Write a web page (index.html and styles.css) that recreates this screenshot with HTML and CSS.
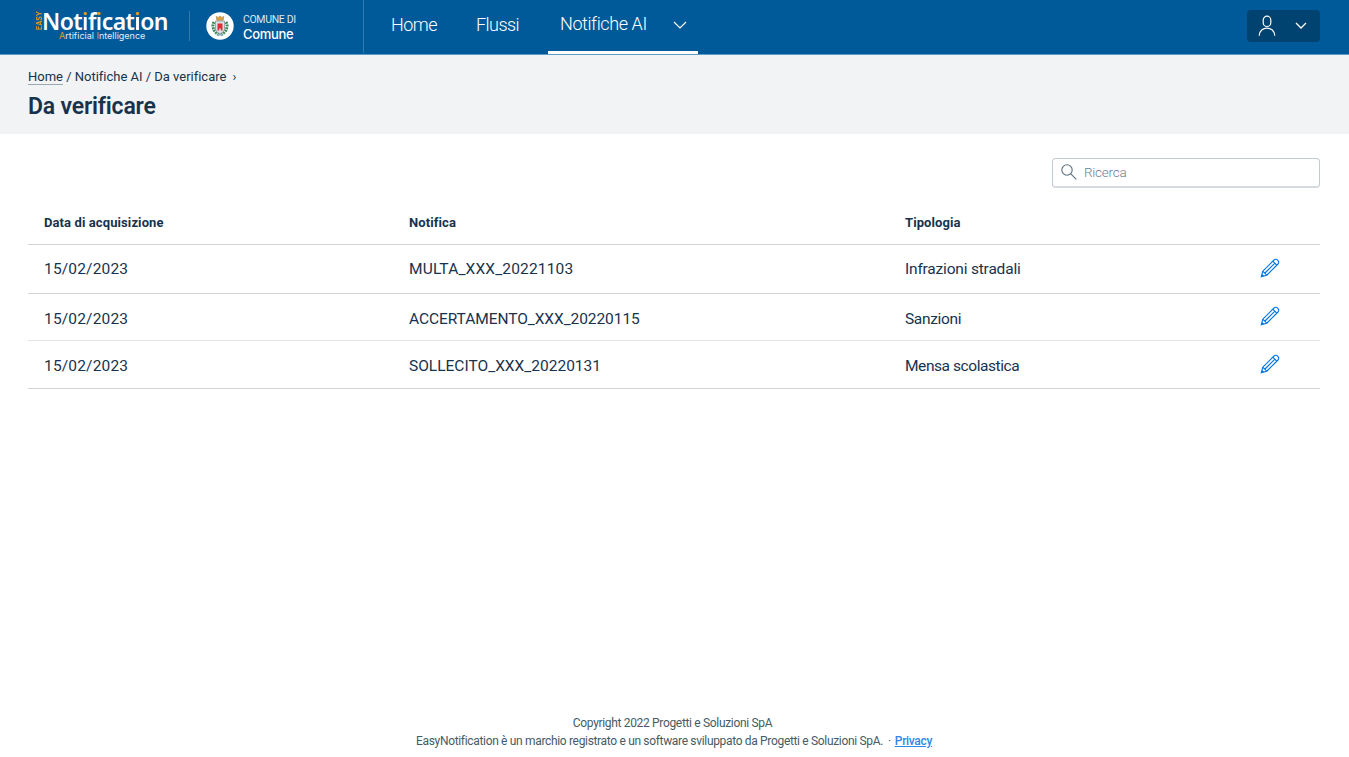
FILE: index.html
```html
<!DOCTYPE html>
<html lang="it">
<head>
<meta charset="utf-8">
<title>Da verificare</title>
<link rel="stylesheet" href="styles.css">
</head>
<body>
<svg class="defs" aria-hidden="true">
  <symbol id="pencil" viewBox="0 0 20 20">
    <path d="M1.300 18.700 2.800 13.200 14 2Q15.500.8 17 1.600L18.400 3Q19.200 4.500 18 6L6.800 17.200Z M2.800 13.200 6.800 17.200 M12.800 3.200l4 4 M5 15 14.900 5.100 M1.500 18.500l1.900-.6-1.300-1.300Z"/>
  </symbol>
</svg>
<header class="header">
  <div class="brand">
    <span class="brand-easy">EASY</span>
    <div class="brand-text">
      <div class="brand-name">Not<i>i</i>f<i>i</i>cat<i>i</i>on</div>
      <div class="brand-sub"><b>A</b>rtificial <b>I</b>ntelligence</div>
    </div>
  </div>
  <div class="entity">
    <svg class="crest" viewBox="0 0 28 28">
      <circle cx="14" cy="14" r="13.700" fill="#fff"/>
      <path d="M8 10C5.500 14 7.500 19.500 12.500 22.500M20 10C22.500 14 20.500 19.500 15.500 22.500" fill="none" stroke="#39895b" stroke-width="3" stroke-dasharray="1.900 .8"/>
      <path d="M9.500 9h9v8.500q-.5 3-4.500 4.200-4-1.200-4.500-4.200Z" fill="#dde0e5" stroke="#8c929b" stroke-width=".8"/>
      <path d="M11.500 11.500h5v7h-1.700v-2h-1.600v2h-1.700Z" fill="#e02d35"/>
      <path d="M10.200 4.400l2 1L14 4l1.800 1.400 2-1-.6 3.800h-6.400Z" fill="#d9a441" stroke="#98713a" stroke-width=".5"/>
      <path d="M11 22.500l3-1 3 1-1 1.800-2-1-2 1Z" fill="#87aeba"/>
    </svg>
    <div class="entity-text">
      <div class="entity-kind">COMUNE DI</div>
      <div class="entity-name">Comune</div>
    </div>
  </div>
  <nav class="nav">
    <a class="nav-item nav-home">Home</a>
    <a class="nav-item nav-flussi">Flussi</a>
    <a class="nav-item active"><span class="nav-ai">Notifiche AI</span>
      <svg class="chev" viewBox="0 0 14 8"><path d="M1 1l6 6 6-6"/></svg>
    </a>
  </nav>
  <button class="user">
    <svg class="person" viewBox="0 0 18 22"><rect x="5.200" y="1.200" width="7.600" height="10.300" rx="3.800"/><path d="M1.200 20.800C1.400 10.500 16.600 10.500 16.800 20.800"/></svg>
    <svg class="chev-user" viewBox="0 0 12 8"><path d="M1 1l5 5 5-5"/></svg>
  </button>
</header>
<section class="heading">
  <div class="crumbs"><a>Home</a> / Notifiche AI / Da verificare <span>›</span></div>
  <h1>Da verificare</h1>
</section>
<main class="main">
  <div class="search">
    <svg viewBox="0 0 16 16"><circle cx="6" cy="6" r="5.200"/><path d="M9.800 9.800l5.500 5.500"/></svg>
    <span>Ricerca</span>
  </div>
  <div class="table">
    <div class="row head"><span>Data di acquisizione</span><span>Notifica</span><span>Tipologia</span></div>
    <div class="row r1"><span class="date">15/02/2023</span><span class="n1">MULTA_XXX_20221103</span><span class="t1">Infrazioni stradali</span><svg class="edit"><use href="#pencil"/></svg></div>
    <div class="row r2"><span class="date">15/02/2023</span><span class="n2">ACCERTAMENTO_XXX_20220115</span><span class="t2">Sanzioni</span><svg class="edit"><use href="#pencil"/></svg></div>
    <div class="row r3"><span class="date">15/02/2023</span><span class="n3">SOLLECITO_XXX_20220131</span><span class="t3">Mensa scolastica</span><svg class="edit"><use href="#pencil"/></svg></div>
  </div>
</main>
<footer class="footer">
  <div class="copy">Copyright 2022 Progetti e Soluzioni SpA</div>
  <div class="legal"><span class="legal-text">EasyNotification è un marchio registrato e un software sviluppato da Progetti e Soluzioni SpA.</span><span class="dot">·</span><a>Privacy</a></div>
</footer>
</body>
</html>
```
FILE: styles.css
```css
* { box-sizing: border-box; }
body {
  margin: 0;
  height: 757px;
  display: flex;
  flex-direction: column;
  background: #fff;
  color: #17324d;
  font-family: Roboto, "Liberation Sans", sans-serif;
  overflow: hidden;
}
.defs { position: absolute; width: 0; height: 0; }
svg { fill: none; flex: none; }

.header {
  height: 55px;
  flex: none;
  display: flex;
  background: #005a9a;
  border-bottom: 1px solid #5d9cca;
  color: #fff;
}
.brand {
  width: 190px;
  height: 30px;
  margin-top: 11px;
  padding-left: 38px;
  display: flex;
  border-right: 1px solid #337bae;
}
.brand-easy {
  width: 4px;
  height: 19px;
  writing-mode: vertical-rl;
  transform: rotate(180deg);
  font: 700 7px/4px Inter, sans-serif;
  letter-spacing: -0.1px;
  color: #e69a17;
}
.brand-name {
  height: 21px;
  font: 600 23px/20px "Noto Sans", sans-serif;
  letter-spacing: -0.6px;
  white-space: nowrap;
}
.brand-name i {
  font-style: normal;
  color: transparent;
  background: linear-gradient(#f39c12 11px, #fff 11px);
  background-clip: text;
  -webkit-background-clip: text;
}
.brand-sub {
  padding-left: 17px;
  font: 400 9px/8px Inter, sans-serif;
  white-space: nowrap;
  color: #e3edf5;
}
.brand-sub b { font-weight: 400; color: #e69a17; }
.entity {
  width: 174px;
  height: 53px;
  padding: 12px 0 0 16px;
  display: flex;
  gap: 9px;
  border-right: 1px solid #337bae;
}
.crest { width: 28px; height: 28px; }
.entity-kind {
  font-size: 10.500px;
  line-height: 15px;
  letter-spacing: -0.35px;
  color: #dce8f2;
  white-space: nowrap;
}
.entity-name { font: 500 13px/15px Inter, sans-serif; letter-spacing: -0.3px; }
.nav { display: flex; padding-left: 27px; }
.nav-item {
  font-size: 18px;
  line-height: 49px;
  font-weight: 300;
  letter-spacing: -0.55px;
  white-space: nowrap;
}
.nav-home { width: 85px; }
.nav-flussi { width: 72px; }
.active {
  width: 150px;
  height: 54px;
  padding: 0 11px 0 12px;
  display: flex;
  justify-content: space-between;
  border-bottom: 3px solid #fff;
  line-height: 48px;
  letter-spacing: -0.4px;
}
.chev { width: 14px; height: 8px; margin-top: 21px; stroke: #fff; stroke-width: 1.100; }
.user {
  width: 73px;
  height: 32px;
  margin: 10px 29px 0 auto;
  padding: 0 13px 0 11px;
  display: flex;
  align-items: center;
  justify-content: space-between;
  border: 0;
  border-radius: 4px;
  background: #004270;
}
.person { width: 18px; height: 22px; stroke: #fff; stroke-width: 1.200; }
.chev-user { width: 12px; height: 8px; stroke: #fff; stroke-width: 1.300; }

.heading { height: 79px; flex: none; padding: 12px 28px 0; background: #f1f3f5; }
.crumbs { font-size: 13px; line-height: 20px; letter-spacing: -0.01px; white-space: nowrap; }
.crumbs a { display: inline-block; line-height: 14px; border-bottom: 1px solid #9aa7b3; }
.crumbs span { margin-left: 3px; }
.heading h1 {
  margin: 5px 0 0;
  font-size: 23px;
  line-height: 30px;
  font-weight: 600;
  letter-spacing: -0.18px;
  white-space: nowrap;
}

.main { flex: 1; padding: 24px 29px 0 28px; }
.search {
  width: 268px;
  height: 30px;
  margin-left: auto;
  padding: 0 0 1px 8px;
  display: flex;
  align-items: center;
  gap: 7px;
  border: 1px solid #c3cad3;
  border-bottom: 2px solid #d5dae1;
  border-radius: 4px;
  font-size: 13.500px;
  font-weight: 300;
  letter-spacing: -0.25px;
  color: #6b7f93;
}
.search svg { width: 16px; height: 16px; stroke: #5c6f82; stroke-width: 1.100; }
.table { margin-top: 14px; }
.row {
  display: grid;
  grid-template-columns: 365px 496px 355px 20px;
  align-items: center;
  padding-left: 16px;
  border-bottom: 1px solid #cfd3d7;
  font-size: 15.500px;
  white-space: nowrap;
}
.row span { justify-self: start; }
.head { height: 43px; padding-bottom: 1px; font-size: 13px; font-weight: 700; letter-spacing: 0.1px; }
.r1 { height: 49px; }
.r2 { height: 47px; border-bottom-color: #e1e4e7; }
.r3 { height: 48px; }
.r2 > span { padding-top: 3px; }
.r3 > span { padding-top: 2px; }
.date { letter-spacing: 0.17px; }
.n1 { letter-spacing: 0.16px; }
.n2 { letter-spacing: -0.07px; }
.t1 { letter-spacing: -0.19px; }
.t2 { letter-spacing: -0.33px; }
.t3 { letter-spacing: -0.43px; }
.edit { width: 20px; height: 20px; margin-bottom: 2px; stroke: #0073e6; stroke-width: 1.150; }

.footer {
  height: 43px;
  flex: none;
  text-align: center;
  font-size: 12px;
  line-height: 18px;
  letter-spacing: -0.33px;
  color: #455b65;
}
.copy { padding-right: 4px; }
.legal { display: flex; justify-content: center; padding-right: 1px; }
.dot { margin: 0 4px 0 5px; }
.footer a { color: #2e88e8; font-weight: 500; text-decoration: underline; }
```
